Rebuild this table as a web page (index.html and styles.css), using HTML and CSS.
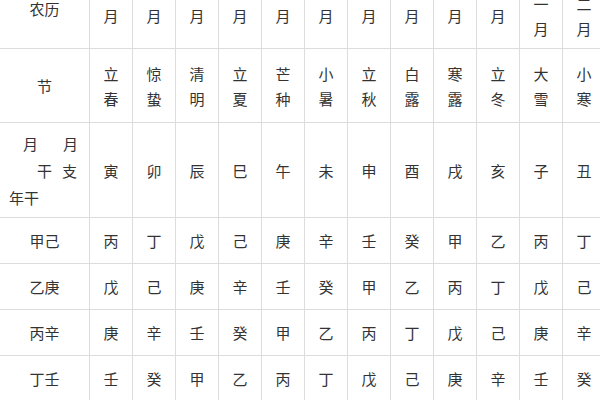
FILE: index.html
```html
<!DOCTYPE html>
<html lang="zh">
<head>
<meta charset="utf-8">
<title>农历月干支表</title>
<link rel="stylesheet" href="styles.css">
</head>
<body>
<table class="ganzhi">
  <colgroup>
    <col class="c-head">
    <col class="c-m"><col class="c-m"><col class="c-m"><col class="c-m"><col class="c-m"><col class="c-m">
    <col class="c-m"><col class="c-m"><col class="c-m"><col class="c-m"><col class="c-m"><col class="c-m">
  </colgroup>
  <tr class="r-month">
    <td class="lunar">农历</td>
    <td>正<br>月</td><td>二<br>月</td><td>三<br>月</td><td>四<br>月</td><td>五<br>月</td><td>六<br>月</td>
    <td>七<br>月</td><td>八<br>月</td><td>九<br>月</td><td>十<br>月</td><td>十<br>一<br>月</td><td>十<br>二<br>月</td>
  </tr>
  <tr class="r-jie">
    <td>节</td>
    <td>立<br>春</td><td>惊<br>蛰</td><td>清<br>明</td><td>立<br>夏</td><td>芒<br>种</td><td>小<br>暑</td>
    <td>立<br>秋</td><td>白<br>露</td><td>寒<br>露</td><td>立<br>冬</td><td>大<br>雪</td><td>小<br>寒</td>
  </tr>
  <tr class="r-zhi">
    <td class="diag">
      <div class="dl dl1"><span>月</span><span class="gap1">月</span></div>
      <div class="dl dl2"><span>干</span><span class="gap2">支</span></div>
      <div class="dl dl3">年干</div>
    </td>
    <td>寅</td><td>卯</td><td>辰</td><td>巳</td><td>午</td><td>未</td>
    <td>申</td><td>酉</td><td>戌</td><td>亥</td><td>子</td><td>丑</td>
  </tr>
  <tr class="r-gan">
    <td>甲己</td>
    <td>丙</td><td>丁</td><td>戊</td><td>己</td><td>庚</td><td>辛</td>
    <td>壬</td><td>癸</td><td>甲</td><td>乙</td><td>丙</td><td>丁</td>
  </tr>
  <tr class="r-gan">
    <td>乙庚</td>
    <td>戊</td><td>己</td><td>庚</td><td>辛</td><td>壬</td><td>癸</td>
    <td>甲</td><td>乙</td><td>丙</td><td>丁</td><td>戊</td><td>己</td>
  </tr>
  <tr class="r-gan">
    <td>丙辛</td>
    <td>庚</td><td>辛</td><td>壬</td><td>癸</td><td>甲</td><td>乙</td>
    <td>丙</td><td>丁</td><td>戊</td><td>己</td><td>庚</td><td>辛</td>
  </tr>
  <tr class="r-gan">
    <td>丁壬</td>
    <td>壬</td><td>癸</td><td>甲</td><td>乙</td><td>丙</td><td>丁</td>
    <td>戊</td><td>己</td><td>庚</td><td>辛</td><td>壬</td><td>癸</td>
  </tr>
</table>
</body>
</html>
```
FILE: styles.css
```css
html, body {
  margin: 0;
  padding: 0;
  overflow: hidden;
  background: #fff;
}
body {
  width: 600px;
  height: 400px;
  font-family: "Noto Sans CJK SC", "Liberation Sans", sans-serif;
  font-size: 15px;
  color: #333;
}
.ganzhi {
  border-collapse: collapse;
  table-layout: fixed;
  width: 606px;
  margin-top: -43px;
  margin-left: -1px;
}
.c-head { width: 90px; }
.c-m { width: 43px; }
.ganzhi td {
  border: 1px solid #dcdcdc;
  padding: 0;
  text-align: center;
  vertical-align: middle;
  line-height: 25px;
}
.r-month { height: 91px; }
.r-jie { height: 74px; }
.r-zhi { height: 95px; }
.r-gan { height: 46px; }
.ganzhi td.lunar {
  padding-top: 10px;
}
.ganzhi td.diag {
  text-align: left;
  line-height: 27px;
}
.dl1 { padding-left: 23px; }
.dl1 .gap1 { margin-left: 25px; }
.dl2 { padding-left: 37px; }
.dl2 .gap2 { margin-left: 10px; }
.dl3 { padding-left: 9px; }
```
